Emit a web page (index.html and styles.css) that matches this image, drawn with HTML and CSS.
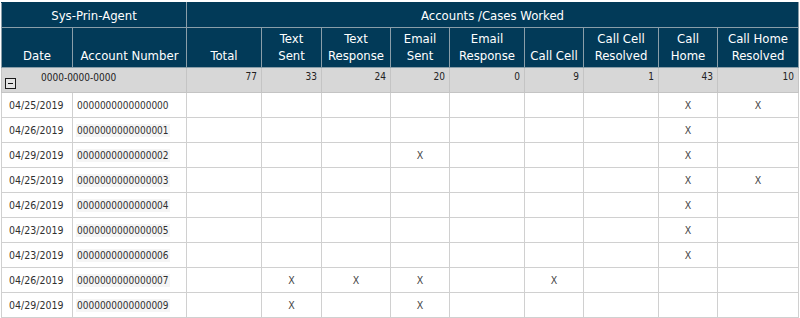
FILE: index.html
```html
<!DOCTYPE html>
<html>
<head>
<meta charset="utf-8">
<link rel="stylesheet" href="styles.css">
</head>
<body>
<table class="grid">
  <colgroup>
    <col class="c-date"><col class="c-acct"><col class="c-total"><col class="c-ts"><col class="c-tr"><col class="c-es"><col class="c-er"><col class="c-cc"><col class="c-ccr"><col class="c-ch"><col class="c-chr">
  </colgroup>
  <thead>
    <tr class="h1">
      <th colspan="2">Sys-Prin-Agent</th>
      <th colspan="9">Accounts /Cases Worked</th>
    </tr>
    <tr class="h2">
      <th>Date</th><th>Account Number</th><th>Total</th><th>Text<br>Sent</th><th>Text<br>Response</th><th>Email<br>Sent</th><th>Email<br>Response</th><th>Call Cell</th><th>Call Cell<br>Resolved</th><th>Call<br>Home</th><th>Call Home<br>Resolved</th>
    </tr>
  </thead>
  <tbody>
    <tr class="group">
      <td colspan="2"><div class="gwrap"><span class="toggle"></span><span class="glabel">0000-0000-0000</span></div></td>
      <td class="num">77</td><td class="num">33</td><td class="num">24</td><td class="num">20</td><td class="num">0</td><td class="num">9</td><td class="num">1</td><td class="num">43</td><td class="num">10</td>
    </tr>
    <tr><td class="date">04/25/2019</td><td class="acc"><span class="acct plain">0000000000000000</span></td><td></td><td></td><td></td><td></td><td></td><td></td><td></td><td class="x">X</td><td class="x">X</td></tr>
    <tr><td class="date">04/26/2019</td><td class="acc"><span class="acct">0000000000000001</span></td><td></td><td></td><td></td><td></td><td></td><td></td><td></td><td class="x">X</td><td></td></tr>
    <tr><td class="date">04/29/2019</td><td class="acc"><span class="acct">0000000000000002</span></td><td></td><td></td><td></td><td class="x">X</td><td></td><td></td><td></td><td class="x">X</td><td></td></tr>
    <tr><td class="date">04/25/2019</td><td class="acc"><span class="acct">0000000000000003</span></td><td></td><td></td><td></td><td></td><td></td><td></td><td></td><td class="x">X</td><td class="x">X</td></tr>
    <tr><td class="date">04/26/2019</td><td class="acc"><span class="acct">0000000000000004</span></td><td></td><td></td><td></td><td></td><td></td><td></td><td></td><td class="x">X</td><td></td></tr>
    <tr><td class="date">04/23/2019</td><td class="acc"><span class="acct">0000000000000005</span></td><td></td><td></td><td></td><td></td><td></td><td></td><td></td><td class="x">X</td><td></td></tr>
    <tr><td class="date">04/23/2019</td><td class="acc"><span class="acct">0000000000000006</span></td><td></td><td></td><td></td><td></td><td></td><td></td><td></td><td class="x">X</td><td></td></tr>
    <tr><td class="date">04/26/2019</td><td class="acc"><span class="acct">0000000000000007</span></td><td></td><td class="x">X</td><td class="x">X</td><td class="x">X</td><td></td><td class="x">X</td><td></td><td></td><td></td></tr>
    <tr><td class="date">04/29/2019</td><td class="acc"><span class="acct">0000000000000009</span></td><td></td><td class="x">X</td><td></td><td class="x">X</td><td></td><td></td><td></td><td></td><td></td></tr>
  </tbody>
</table>
</body>
</html>
```
FILE: styles.css
```css
html, body {
  margin: 0;
  padding: 0;
  background: #ffffff;
}
body {
  padding: 2px 0 0 1px;
  font-family: "DejaVu Sans Condensed", "DejaVu Sans", sans-serif;
}
.grid {
  border-collapse: collapse;
  table-layout: fixed;
  width: 797px;
}
.c-date { width: 71px; }
.c-acct { width: 114px; }
.c-total { width: 75px; }
.c-ts { width: 60px; }
.c-tr { width: 69px; }
.c-es { width: 59px; }
.c-er { width: 75px; }
.c-cc { width: 59px; }
.c-ccr { width: 75px; }
.c-ch { width: 59px; }
.c-chr { width: 81px; }

.grid th {
  background: #023a58;
  color: #ffffff;
  font-weight: normal;
  font-size: 13px;
  line-height: 17px;
  border: 1px solid #8a9ea9;
  text-align: center;
  padding: 0 2px;
  overflow: hidden;
  white-space: nowrap;
}
.h1 th {
  height: 23px;
  padding-top: 1px;
  border-top-color: #023a58;
}
.h2 th {
  height: 35px;
  vertical-align: bottom;
  padding-bottom: 3px;
  padding-top: 1px;
}
.grid td {
  border: 1px solid #d0d0d0;
  font-size: 10.5px;
  color: #303030;
  height: 24px;
  padding: 0 4px;
  white-space: nowrap;
  overflow: hidden;
}
.grid td.date {
  padding-left: 7px;
  padding-right: 2px;
}
.grid td.acc {
  font-size: 10px;
  padding-left: 3px;
}
.group td {
  background: #d7d7d7;
  border-color: #c4c4c4;
  vertical-align: top;
  padding-top: 3px;
  height: 21px;
  color: #222222;
  font-size: 10px;
}
.group td.num {
  text-align: right;
  padding-right: 4px;
}
.group td:first-child {
  padding: 0;
}
.gwrap {
  display: flex;
  height: 24px;
}
.toggle {
  align-self: flex-end;
  margin: 0 0 3px 3px;
  width: 9px;
  height: 9px;
  border: 1px solid #1a1a1a;
  background: #e4e4e4;
  position: relative;
  flex: none;
}
.toggle::after {
  content: "";
  position: absolute;
  left: 2px;
  right: 2px;
  top: 4px;
  height: 1px;
  background: #111111;
}
.glabel {
  margin: 4px 0 0 25px;
}
.acct {
  background: #f5f5f5;
  padding: 1px 1px;
}
.acct.plain {
  background: transparent;
}
.grid td.x {
  text-align: center;
  color: #444444;
}
```
